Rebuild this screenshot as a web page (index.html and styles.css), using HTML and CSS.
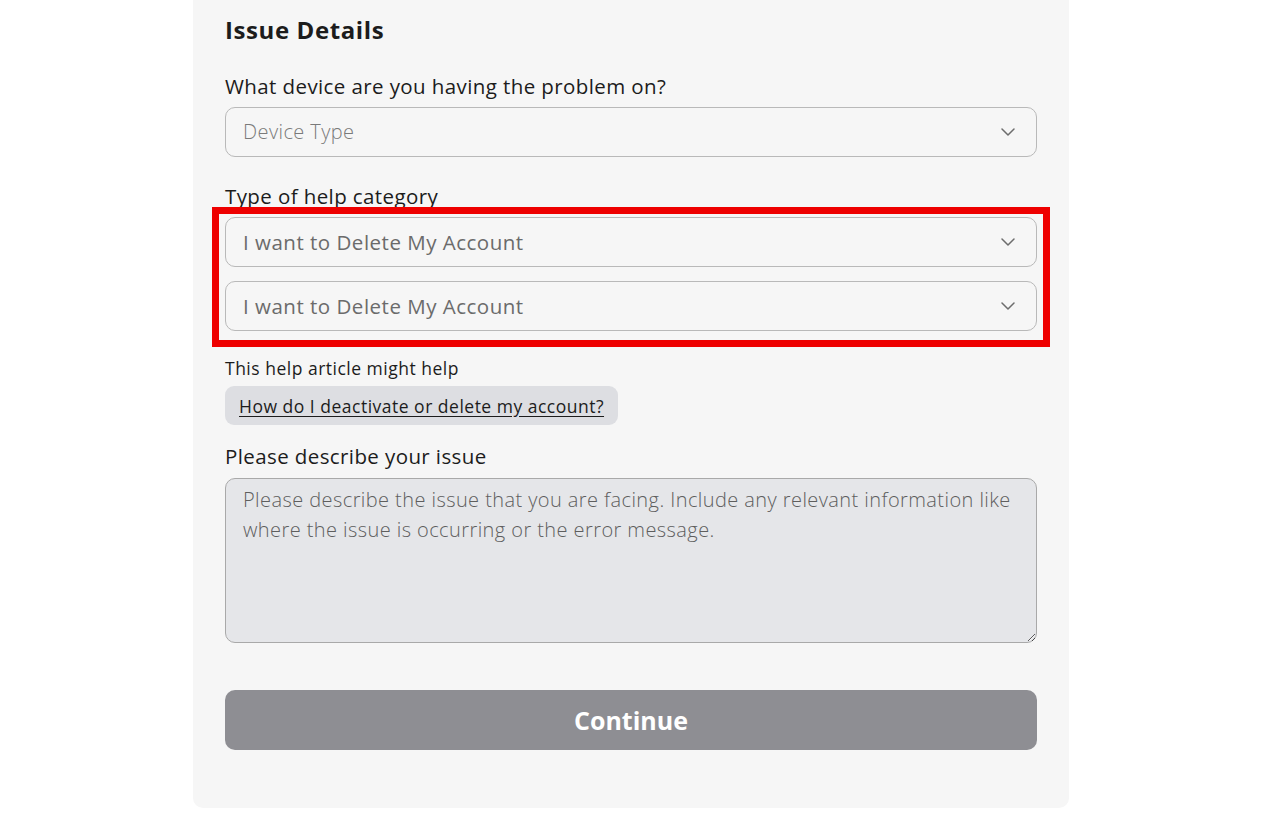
FILE: index.html
```html
<!DOCTYPE html>
<html lang="en">
<head>
<meta charset="utf-8">
<title>Issue Details</title>
<link rel="stylesheet" href="styles.css">
</head>
<body>
<main class="card">
  <h2 class="title">Issue Details</h2>

  <label class="label">What device are you having the problem on?</label>
  <div class="select">
    <span class="select-text placeholder">Device Type</span>
    <svg class="chev" width="14" height="8" viewBox="0 0 14 8"><path d="M1 1l6 6 6-6" fill="none" stroke="#6d6d6d" stroke-width="1.5" stroke-linecap="round" stroke-linejoin="round"/></svg>
  </div>

  <label class="label label-gap">Type of help category</label>
  <div class="highlight">
    <div class="select">
      <span class="select-text chosen">I want to Delete My Account</span>
      <svg class="chev" width="14" height="8" viewBox="0 0 14 8"><path d="M1 1l6 6 6-6" fill="none" stroke="#6d6d6d" stroke-width="1.5" stroke-linecap="round" stroke-linejoin="round"/></svg>
    </div>
    <div class="select">
      <span class="select-text chosen">I want to Delete My Account</span>
      <svg class="chev" width="14" height="8" viewBox="0 0 14 8"><path d="M1 1l6 6 6-6" fill="none" stroke="#6d6d6d" stroke-width="1.5" stroke-linecap="round" stroke-linejoin="round"/></svg>
    </div>
  </div>

  <p class="hint">This help article might help</p>
  <a class="pill" href="#">How do I deactivate or delete my account?</a>

  <label class="label label-describe">Please describe your issue</label>
  <textarea class="issue" placeholder="Please describe the issue that you are facing. Include any relevant information like where the issue is occurring or the error message."></textarea>

  <button class="continue" type="button">Continue</button>
</main>
</body>
</html>
```

FILE: styles.css
```css
* { box-sizing: border-box; }

html, body {
  margin: 0;
  padding: 0;
  background: #ffffff;
  height: 833px;
  overflow: hidden;
}

body {
  font-family: "Open Sans", "Noto Sans", sans-serif;
  color: #1c1c1c;
}

.card {
  width: 876px;
  margin: -20px 0 0 193px;
  padding: 34px 32px 58px 32px;
  background: #f6f6f6;
  border-radius: 10px;
  display: flex;
  flex-direction: column;
  align-items: stretch;
}

.title {
  margin: 0;
  font-size: 24px;
  line-height: 32px;
  font-weight: 700;
  letter-spacing: 0.6px;
  color: #1c1c1c;
}

.label {
  display: block;
  margin-top: 26px;
  font-size: 20.5px;
  line-height: 28px;
  font-weight: 500;
  letter-spacing: 0.4px;
  color: #1c1c1c;
}

.label-gap { margin-top: 25px; }
.label-describe { margin-top: 17px; }

.select {
  margin-top: 7px;
  height: 50px;
  border: 1px solid #b9b9b9;
  border-radius: 10px;
  background: #f6f6f6;
  display: flex;
  align-items: center;
  justify-content: space-between;
  padding: 0 21px 0 17px;
}

.select-text {
  font-size: 20.5px;
  line-height: 28px;
}

.placeholder {
  font-size: 20px;
  font-weight: 300;
  letter-spacing: 0.4px;
  color: #7a7a7a;
}

.chosen {
  font-weight: 500;
  letter-spacing: 0.5px;
  color: #6b6b6b;
}

.highlight {
  margin: -3px -13px 0 -13px;
  border: 7px solid #ee0000;
  padding: 3px 6px 9px 6px;
  display: flex;
  flex-direction: column;
  gap: 14px;
}

.highlight .select { margin-top: 0; }

.hint {
  margin: 9px 0 0 0;
  font-size: 17.5px;
  line-height: 24px;
  letter-spacing: 0.5px;
  color: #1c1c1c;
}

.pill {
  align-self: flex-start;
  margin-top: 6px;
  height: 39px;
  display: flex;
  align-items: center;
  padding: 0 14px;
  background: #dddee2;
  border-radius: 9px;
  font-size: 17.5px;
  letter-spacing: 0.5px;
  color: #1c1c1c;
  text-decoration: underline;
  text-underline-offset: 3px;
}

.issue {
  margin-top: 8px;
  height: 165px;
  width: 100%;
  resize: vertical;
  border: 1px solid #a9a9a9;
  border-radius: 10px;
  background: #e5e6e9;
  padding: 6px 10px 6px 17px;
  font-family: "Open Sans", "Noto Sans", sans-serif;
  font-size: 20px;
  font-weight: 300;
  letter-spacing: 0.42px;
  line-height: 30px;
  color: #1c1c1c;
}

.issue::placeholder {
  color: #5e5e5e;
  opacity: 1;
}

.continue {
  margin-top: 47px;
  height: 60px;
  border: none;
  border-radius: 10px;
  background: #8e8e93;
  color: #ffffff;
  font-family: "Open Sans", "Noto Sans", sans-serif;
  font-size: 25px;
  font-weight: 700;
  cursor: pointer;
}
```
